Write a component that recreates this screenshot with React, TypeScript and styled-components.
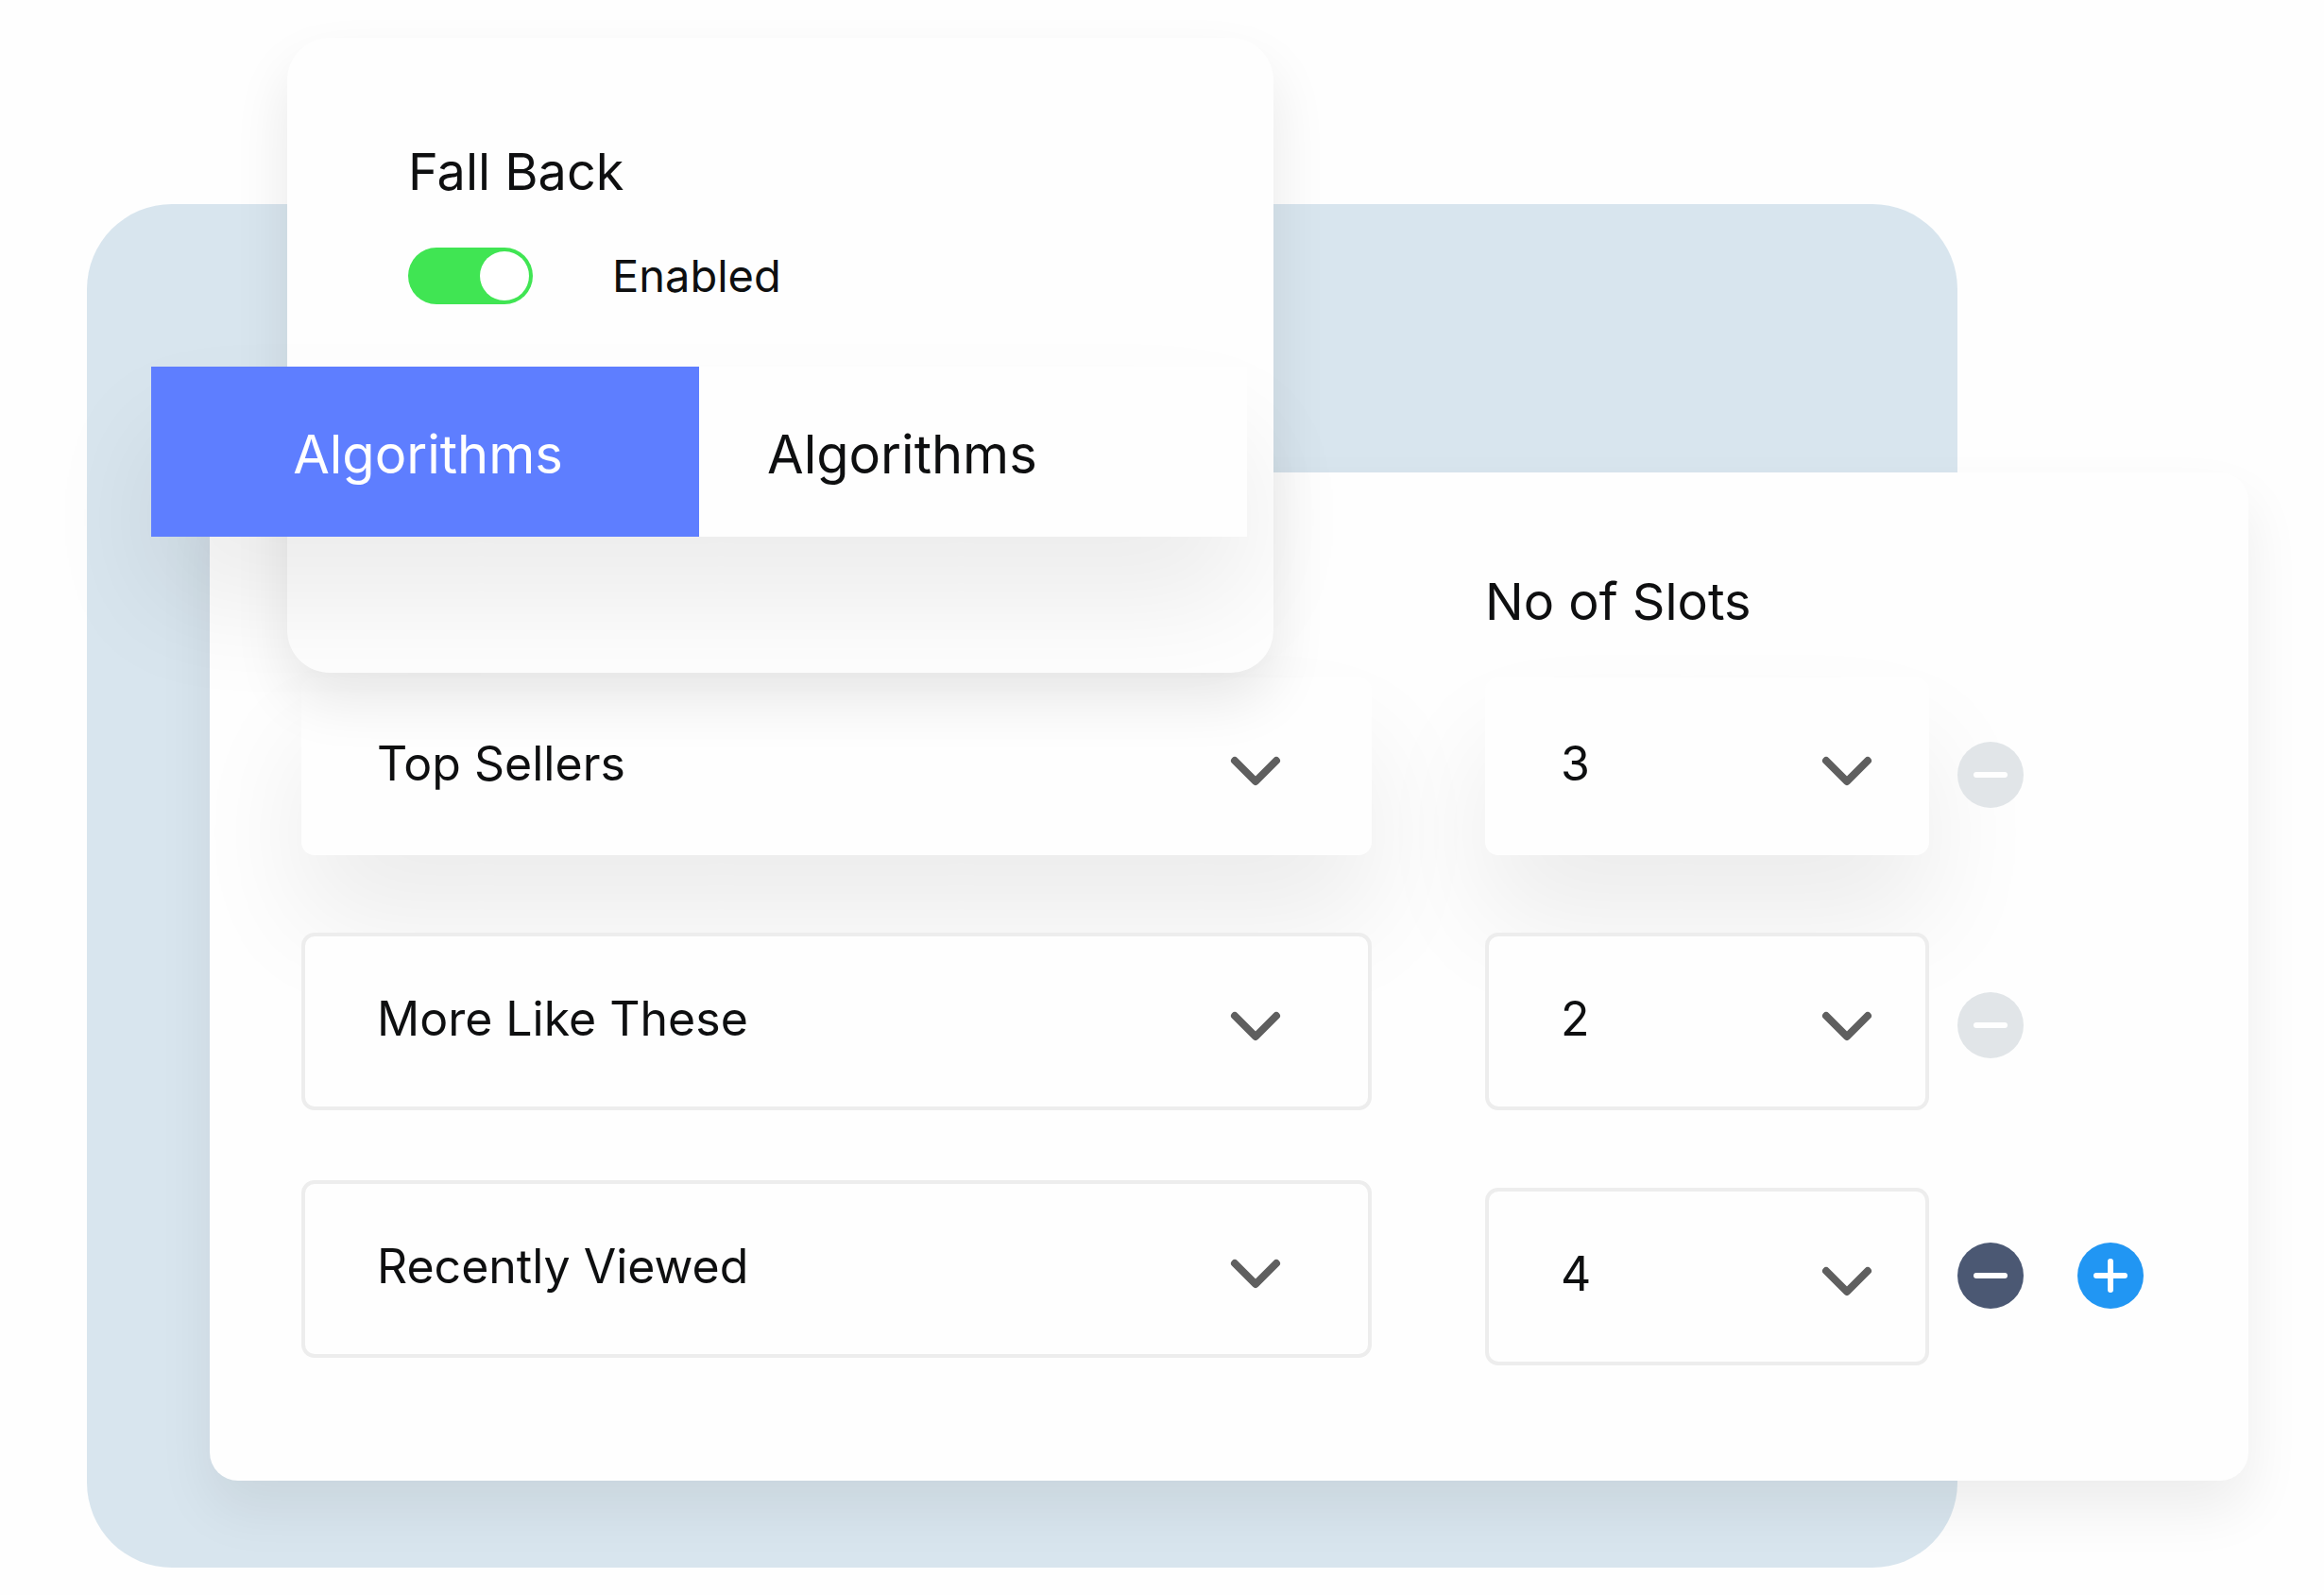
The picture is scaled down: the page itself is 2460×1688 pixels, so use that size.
import React from "react";
import styled, { createGlobalStyle, css } from "styled-components";

const GlobalStyle = createGlobalStyle`
  *, *::before, *::after { box-sizing: border-box; }
  body { margin: 0; background: #fefefe; }
  button, select, input { font: inherit; color: inherit; margin: 0; }
`;

const ink = "#0e0f10";
const raised = "0 70px 120px rgba(0, 0, 0, 0.075)";

const Page = styled.main`
  display: grid;
  grid-template-columns: minmax(0, 1fr);
  font-family: Inter, Roboto, sans-serif;
  font-weight: 370;
  color: ${ink};
`;

const Backdrop = styled.div`
  grid-area: 1 / 1;
  margin: 216px 388px 28px 92px;
  border-radius: 90px;
  background: #d8e5ee;
`;

const SlotsCard = styled.section`
  grid-area: 1 / 1;
  margin: 500px 80px 120px 222px;
  padding: 105px 111px 122px 97px;
  border-radius: 30px;
  background: #fefefe;
  box-shadow: 0 30px 60px rgba(0, 0, 0, 0.07);
  display: grid;
  grid-template-columns: minmax(0, 1fr) 470px 227px;
  grid-template-rows: 64px auto;
  row-gap: 48px;
`;

const Title = styled.h2`
  margin: 0;
  font-size: 54px;
  line-height: 64px;
  font-weight: 370;
`;

const SlotsTitle = styled(Title)`
  grid-column: 2 / -1;
`;

const Column = styled.div<{ $gap: number }>`
  display: flex;
  flex-direction: column;
  gap: ${(p) => p.$gap}px;
`;

const AlgorithmColumn = styled(Column)`
  grid-row: 2;
  grid-column: 1;
  margin-right: 120px;
`;

const CountColumn = styled(Column)`
  grid-row: 2;
  grid-column: 2;
`;

const ActionColumn = styled(Column)`
  grid-row: 2;
  grid-column: 3;
  padding: 68px 0 0 30px;
`;

const Field = styled.label<{ $raised?: boolean; $after?: number }>`
  display: grid;
  grid-template-columns: minmax(0, 1fr);
  align-items: center;
  height: 188px;
  margin-bottom: ${(p) => p.$after ?? 0}px;
  border: 4px solid #ededed;
  border-radius: 14px;
  background: #fefefe;
  ${(p) =>
    p.$raised &&
    css`
      border-color: #fefefe;
      box-shadow: ${raised};
    `}
`;

const Select = styled.select`
  grid-area: 1 / 1;
  width: 100%;
  height: 100%;
  padding: 0 120px 6px 76px;
  border: 0;
  background: transparent;
  appearance: none;
  font-size: 50px;
  line-height: 64px;
`;

const Chevron = styled.svg`
  grid-area: 1 / 1;
  justify-self: end;
  width: 54px;
  height: 42px;
  margin: 10px 92px 0 0;
  pointer-events: none;
`;

const CountField = styled(Field)`
  ${Chevron} { margin-right: 56px; }
`;

const Actions = styled.div`
  display: flex;
  gap: 57px;
`;

const RoundButton = styled.button<{ $tone: string }>`
  display: grid;
  place-items: center;
  flex: none;
  width: 70px;
  height: 70px;
  padding: 0;
  border: 0;
  border-radius: 50%;
  background: ${(p) => p.$tone};
  color: #fff;
`;

const FallBackCard = styled.section`
  grid-area: 1 / 1;
  align-self: start;
  position: relative;
  width: 1044px;
  height: 672px;
  margin: 40px 0 0 304px;
  padding: 110px 128px 0;
  border-radius: 45px;
  background: #fefefe;
  box-shadow: 0 30px 60px rgba(0, 0, 0, 0.09);
`;

const ToggleRow = styled.label`
  display: flex;
  align-items: center;
  gap: 84px;
  margin-top: 46px;
  height: 64px;
  font-size: 47px;
  line-height: 64px;
`;

const Toggle = styled.input`
  appearance: none;
  display: flex;
  align-items: center;
  width: 132px;
  height: 60px;
  padding: 0 4px;
  border-radius: 30px;
  background: #b9bfc6;
  &::before {
    content: "";
    width: 52px;
    height: 52px;
    border-radius: 50%;
    background: #fff;
  }
  &:checked {
    justify-content: flex-end;
    background: #40e553;
  }
`;

const Tabs = styled.div`
  display: grid;
  grid-template-columns: 580px 580px;
  width: 1160px;
  margin: 64px 0 0 -272px;
  box-shadow: ${raised};
`;

const Tab = styled.button<{ $active?: boolean }>`
  height: 180px;
  padding: 6px 0 0 ${(p) => (p.$active ? 6 : 72)}px;
  border: 0;
  background: ${(p) => (p.$active ? "#5e7eff" : "#fefefe")};
  color: ${(p) => (p.$active ? "#fff" : ink)};
  text-align: ${(p) => (p.$active ? "center" : "left")};
  font-size: 56px;
  line-height: 64px;
`;

const DownIcon = () => (
  <Chevron viewBox="0 0 54 42" fill="none" aria-hidden="true">
    <path d="M5 10 27 32 49 10" stroke="#5f5f5f" strokeWidth="8" strokeLinecap="round" strokeLinejoin="round" />
  </Chevron>
);

const Sign = ({ plus }: { plus?: boolean }) => (
  <svg width="38" height="38" viewBox="0 0 38 38" aria-hidden="true">
    <path d={plus ? "M4 19H34M19 4V34" : "M4 19H34"} stroke="#fff" strokeWidth="6" strokeLinecap="round" />
  </svg>
);

const rows = [
  { name: "Top Sellers", slots: 3 },
  { name: "More Like These", slots: 2 },
  { name: "Recently Viewed", slots: 4 },
];

export default function App() {
  return (
    <>
      <GlobalStyle />
      <Page>
        <Backdrop />
        <SlotsCard>
          <SlotsTitle>No of Slots</SlotsTitle>
          <AlgorithmColumn $gap={74}>
            {rows.map((row, i) => (
              <Field key={row.name} $raised={i === 0} $after={i === 0 ? 8 : 0}>
                <Select aria-label="Algorithm" defaultValue={row.name}>
                  {rows.map((r) => (
                    <option key={r.name}>{r.name}</option>
                  ))}
                </Select>
                <DownIcon />
              </Field>
            ))}
          </AlgorithmColumn>
          <CountColumn $gap={82}>
            {rows.map((row, i) => (
              <CountField key={row.name} $raised={i === 0}>
                <Select aria-label={`${row.name} slots`} defaultValue={row.slots}>
                  {[1, 2, 3, 4, 5].map((n) => (
                    <option key={n}>{n}</option>
                  ))}
                </Select>
                <DownIcon />
              </CountField>
            ))}
          </CountColumn>
          <ActionColumn $gap={195}>
            {rows.map((row, i) => {
              const last = i === rows.length - 1;
              return (
                <Actions key={row.name}>
                  <RoundButton type="button" aria-label={`Remove ${row.name}`} $tone={last ? "#4b5873" : "#e1e5e8"}>
                    <Sign />
                  </RoundButton>
                  {last && (
                    <RoundButton type="button" aria-label="Add algorithm" $tone="#2196f3">
                      <Sign plus />
                    </RoundButton>
                  )}
                </Actions>
              );
            })}
          </ActionColumn>
        </SlotsCard>
        <FallBackCard>
          <Title>Fall Back</Title>
          <ToggleRow>
            <Toggle type="checkbox" role="switch" defaultChecked />
            Enabled
          </ToggleRow>
          <Tabs role="tablist">
            <Tab type="button" role="tab" aria-selected="true" $active>Algorithms</Tab>
            <Tab type="button" role="tab" aria-selected="false">Algorithms</Tab>
          </Tabs>
        </FallBackCard>
      </Page>
    </>
  );
}
